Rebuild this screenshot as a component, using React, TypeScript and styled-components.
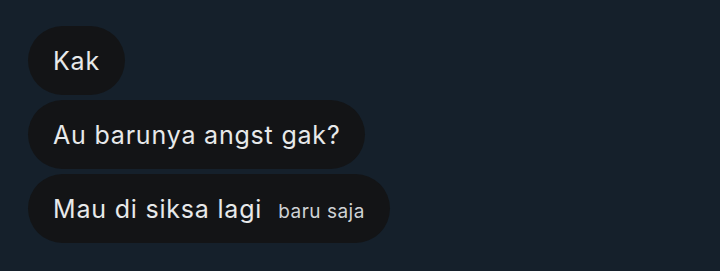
import React from "react";
import styled, { createGlobalStyle } from "styled-components";

const GlobalStyle = createGlobalStyle`
  html, body {
    margin: 0;
    padding: 0;
    background-color: #15202b;
  }
`;

const Screen = styled.div`
  width: 720px;
  height: 271px;
  overflow: hidden;
  background-color: #15202b;
  font-family: Inter, "Noto Sans", sans-serif;
`;

const PrevLine = styled.div`
  height: 26px;
  overflow: hidden;
`;

const PrevText = styled.div`
  margin-top: -29px;
  padding-left: 96px;
  font-size: 25px;
  line-height: 30px;
  letter-spacing: 0.8px;
  color: #8b98a5;
  white-space: nowrap;
`;

const Thread = styled.div`
  display: flex;
  flex-direction: column;
  align-items: flex-start;
  gap: 5px;
  padding-left: 28px;
`;

const Bubble = styled.div`
  display: flex;
  align-items: center;
  gap: 16px;
  height: 69px;
  box-sizing: border-box;
  padding: 0 25px;
  background-color: #131416;
  border-radius: 35px;
  color: #e7e9ea;
  font-size: 25px;
  letter-spacing: 0.8px;
`;

const Time = styled.span`
  font-size: 19px;
  letter-spacing: 0.5px;
  color: #cfd2d5;
  margin-top: 6px;
`;

const App = () => {
  return (
    <Screen>
      <GlobalStyle />
      <PrevLine>
        <PrevText>aku penasaran gimana kelanjutannya ya</PrevText>
      </PrevLine>
      <Thread>
        <Bubble>Kak</Bubble>
        <Bubble>Au barunya angst gak?</Bubble>
        <Bubble>
          Mau di siksa lagi
          <Time>baru saja</Time>
        </Bubble>
      </Thread>
    </Screen>
  );
};

export default App;
